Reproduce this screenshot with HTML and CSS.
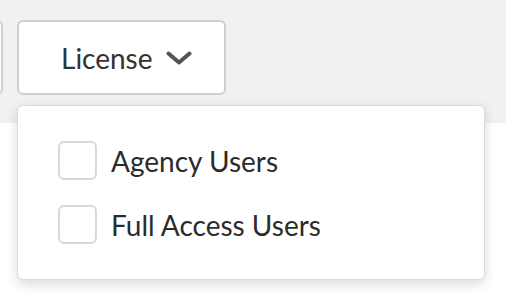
FILE: index.html
```html
<!DOCTYPE html>
<html lang="en">
<head>
  <meta charset="UTF-8">
  <meta name="viewport" content="width=device-width, initial-scale=1.0">
  <title>License Filter</title>
  <link rel="stylesheet" href="styles.css">
</head>
<body>
  <div class="toolbar">
    <button class="filter-btn filter-prev" aria-label="Previous filter"></button>
    <button class="filter-btn filter-license">
      <span>License</span>
      <svg class="chevron" width="26" height="14" viewBox="0 0 26 14">
        <path d="M2.5 2.5 L13 11.5 L23.5 2.5" fill="none" stroke="#555" stroke-width="4" stroke-linecap="round" stroke-linejoin="round"/>
      </svg>
    </button>
  </div>

  <div class="dropdown">
    <label class="option">
      <span class="box"></span>
      <span>Agency Users</span>
    </label>
    <label class="option">
      <span class="box"></span>
      <span>Full Access Users</span>
    </label>
  </div>
</body>
</html>
```

FILE: styles.css
```css
body {
  font-family: 'Lato', 'Open Sans', sans-serif;
  margin: 0;
  padding: 0;
  background: #fff;
  color: #333;
  position: relative;
  min-height: 298px;
}

.toolbar {
  background: #f1f1f3;
  height: 123px;
  padding-top: 20px;
  box-sizing: border-box;
  display: flex;
  gap: 14px;
  overflow: hidden;
}

.filter-btn {
  height: 75px;
  background: #fff;
  border: 2px solid #cfcfd1;
  border-radius: 6px;
  font-family: inherit;
  font-size: 28px;
  color: #333;
  display: flex;
  align-items: center;
}

.filter-prev {
  width: 120px;
  margin-left: -117px;
}

.filter-license {
  width: 209px;
  padding: 0 0 0 42px;
  gap: 13px;
}

.chevron {
  display: block;
}

/* menu that drops over the page */
.dropdown {
  position: absolute;
  top: 105px;
  left: 17px;
  width: 468px;
  height: 175px;
  box-sizing: border-box;
  background: #fff;
  border: 1px solid #dcdcdc;
  border-radius: 6px;
  box-shadow: 0 4px 12px rgba(0, 0, 0, 0.15);
  padding: 35px 0 0 40px;
  display: flex;
  flex-direction: column;
  gap: 25px;
}

.option {
  display: flex;
  align-items: center;
  gap: 14px;
  font-size: 28px;
  color: #2b2b2b;
}

.box {
  width: 39px;
  height: 39px;
  box-sizing: border-box;
  border: 2px solid #d9d9d9;
  border-radius: 6px;
}
```
